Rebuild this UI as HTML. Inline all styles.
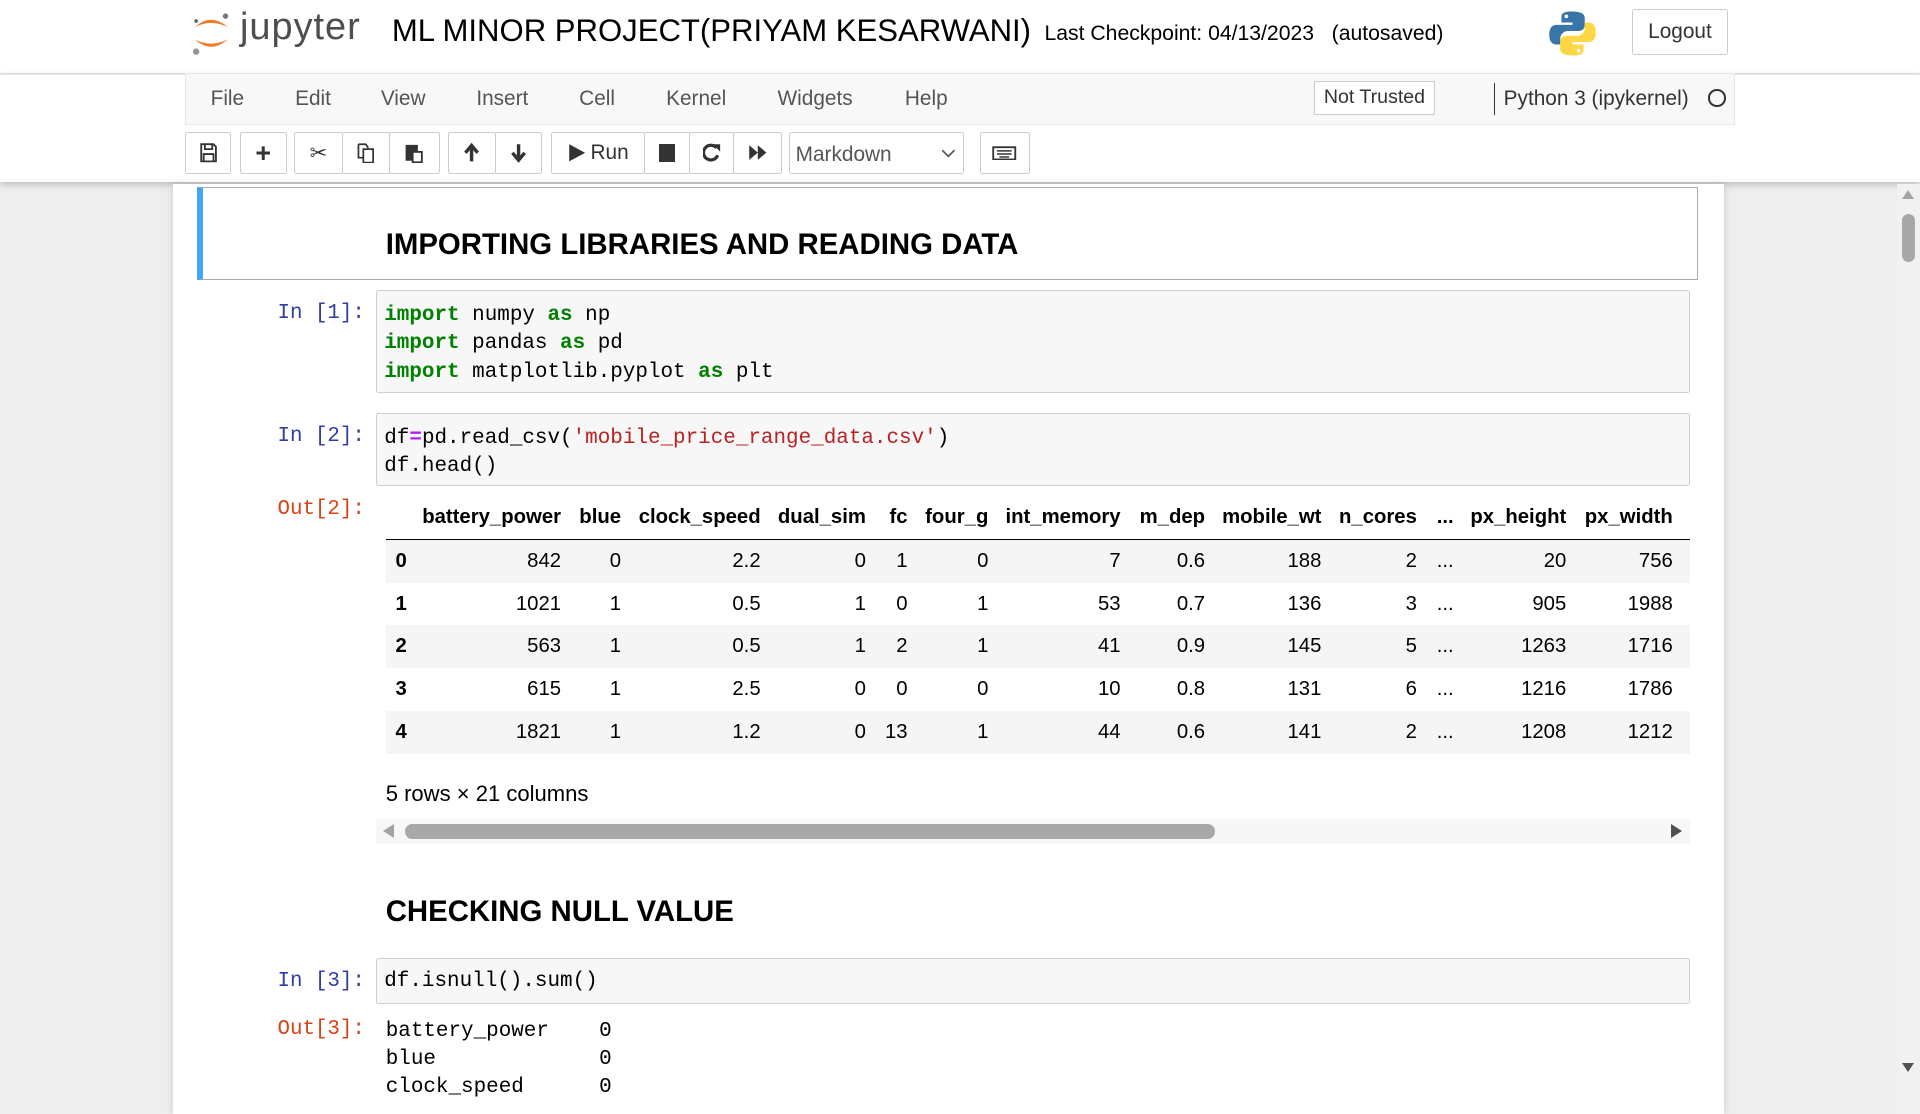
<!DOCTYPE html>
<html><head><meta charset="utf-8"><style>
html,body{margin:0;padding:0}
body{width:1568px;height:882px;overflow:hidden;zoom:1.22449;background:#eee;font-family:"Liberation Sans",sans-serif;position:relative;color:#000}
.abs{position:absolute}
#hdr{left:0;top:0;width:1568px;height:60px;background:#fff;border-bottom:1px solid #e7e7e7}
#bar{left:0;top:61px;width:1568px;height:88px;background:#fff;box-shadow:0 2px 6px rgba(0,0,0,.25)}
.menu{left:151px;top:60px;width:1266px;height:42px;background:#f8f8f8;border:1px solid #e7e7e7;box-sizing:border-box}
.mi{position:absolute;top:71px;font-size:17px;color:#555}
.btn{position:absolute;top:108px;height:34px;border:1px solid #ccc;background:#fff;box-sizing:border-box;border-radius:2px;display:flex;align-items:center;justify-content:center;color:#333;font-size:17px}
.mono{font-family:"Liberation Mono",monospace;font-size:17.1px;line-height:23px}
.prompt{position:absolute;font-family:"Liberation Mono",monospace;font-size:17px;color:#303f9f;text-align:right;width:80px}
.out{color:#d84315}
.inp{position:absolute;left:307px;width:1073px;background:#f7f7f7;border:1px solid #cfcfcf;border-radius:2px;box-sizing:border-box;padding:9px 6px 6px}
.kw{color:#008000;font-weight:bold}
.st{color:#ba2121}
.op{color:#aa22ff;font-weight:bold}
table{border-collapse:collapse;font-size:16.6px;position:absolute;left:315px;top:405px;table-layout:fixed}
td,th{padding:0 8px 0 0;text-align:right;height:35px}
th{font-weight:bold}
thead th{border-bottom:1px solid #000;height:35px}
tbody tr:nth-child(odd){background:#f5f5f5}
td.i,th.i{text-align:left;padding-left:8px}
</style></head><body>
<div id="hdr" class="abs"></div>
<div id="bar" class="abs"></div>
<svg class="abs" style="left:155px;top:8px" width="36" height="38" viewBox="0 0 36 38">
<path d="M4 14 Q17 2 31 14 Q17 7 4 14Z" fill="#f37726"/>
<path d="M4 24 Q17 36 31 24 Q17 31 4 24Z" fill="#f37726"/>
<circle cx="29" cy="5" r="2.2" fill="#767677"/><circle cx="5" cy="34" r="2.6" fill="#989798"/><circle cx="5" cy="9" r="1.5" fill="#616262"/>
</svg>
<div class="abs" style="left:196px;top:5px;font-size:31px;color:#4e4e4e;letter-spacing:.8px">jupyter</div>
<div class="abs" style="left:320px;top:11px;font-size:25.4px">ML MINOR PROJECT(PRIYAM KESARWANI)</div>
<div class="abs" style="left:853px;top:18px;font-size:17.3px">Last Checkpoint: 04/13/2023&nbsp;&nbsp;&nbsp;(autosaved)</div>
<svg class="abs" style="left:1264px;top:7px" width="40" height="40" viewBox="0 0 40 40">
<path d="M19 2c-8 0-8 3-8 5v4h9v2H7c-4 0-6 3-6 8s2 8 6 8h3v-5c0-3 3-6 6-6h9c3 0 5-2 5-5V7c0-3-3-5-11-5z" fill="#3a75a8"/>
<circle cx="15" cy="6" r="1.5" fill="#fff"/>
<path d="M21 38c8 0 8-3 8-5v-4h-9v-2h13c4 0 6-3 6-8s-2-8-6-8h-3v5c0 3-3 6-6 6h-9c-3 0-5 2-5 5v6c0 3 3 5 11 5z" fill="#fdd643"/>
<circle cx="25" cy="34" r="1.5" fill="#fff"/>
</svg>
<div class="abs" style="left:1333px;top:7px;width:78px;height:38px;border:1px solid #ccc;box-sizing:border-box;border-radius:2px;font-size:17px;color:#333;text-align:center;line-height:36px">Logout</div>
<div class="abs menu"></div>
<span class="mi" style="left:172px">File</span><span class="mi" style="left:241px">Edit</span><span class="mi" style="left:311px">View</span><span class="mi" style="left:389px">Insert</span><span class="mi" style="left:473px">Cell</span><span class="mi" style="left:544px">Kernel</span><span class="mi" style="left:635px">Widgets</span><span class="mi" style="left:739px">Help</span>
<div class="abs" style="left:1073px;top:66px;width:99px;height:28px;border:1px solid #ccc;background:#fff;box-sizing:border-box;font-size:16px;color:#333;text-align:center;line-height:26px">Not Trusted</div>
<div class="abs" style="left:1220px;top:68px;width:1px;height:26px;background:#333"></div>
<div class="abs" style="left:1228px;top:71px;font-size:17px;color:#333">Python 3 (ipykernel)</div>
<div class="abs" style="left:1395px;top:73px;width:11px;height:11px;border:2px solid #333;border-radius:50%"></div>
<div class="btn" style="left:151px;width:38px"><svg width="14" height="16"><path d="M1 1h10l2 2v12H1z M4 1v4h6V1 M3 9h8v6H3z" fill="none" stroke="#333" stroke-width="1.5"/></svg></div>
<div class="btn" style="left:196px;width:38px;font-size:22px;font-weight:bold">+</div>
<div class="btn" style="left:240px;width:40px">✂</div>
<div class="btn" style="left:279px;width:40px"><svg width="16" height="17"><path d="M6 5h8v11H6z M2 1h6l2 3 M2 1v11h4" fill="none" stroke="#333" stroke-width="1.4"/></svg></div>
<div class="btn" style="left:318px;width:41px"><svg width="16" height="17"><path d="M1 2h9v12H1z M6 7h8v9H6z" fill="#333" stroke="#333" stroke-width="1"/><path d="M7 8h6v7H7z" fill="#fff"/></svg></div>
<div class="btn" style="left:366px;width:39px"><svg width="14" height="16"><path d="M7 15V3 M2 8l5-6 5 6" fill="none" stroke="#333" stroke-width="2.8"/></svg></div>
<div class="btn" style="left:404px;width:39px"><svg width="14" height="16"><path d="M7 1v12 M2 8l5 6 5-6" fill="none" stroke="#333" stroke-width="2.8"/></svg></div>
<div class="btn" style="left:450px;width:77px"><svg width="14" height="16"><path d="M1 1l13 7-13 7z" fill="#333"/></svg>&nbsp;Run</div>
<div class="btn" style="left:526px;width:38px"><div style="width:13px;height:14px;background:#333"></div></div>
<div class="btn" style="left:563px;width:37px"><svg width="14" height="16"><path d="M11 4A6 6 0 1 0 12 10" fill="none" stroke="#333" stroke-width="2.6"/><path d="M8 1h6v6z" fill="#333"/></svg></div>
<div class="btn" style="left:599px;width:40px"><svg width="16" height="14"><path d="M1 1l7 6-7 6z M8 1l7 6-7 6z" fill="#333"/></svg></div>
<div class="btn" style="left:644px;width:143px;justify-content:flex-start;padding-left:5px;padding-top:4px;font-size:17px;color:#555">Markdown<svg style="position:absolute;right:6px;top:13px" width="12" height="8"><path d="M1 1l5 5 5-5" fill="none" stroke="#555" stroke-width="1.4"/></svg></div>
<div class="btn" style="left:800px;width:41px"><svg width="20" height="12"><rect x="1" y="1" width="18" height="10" fill="none" stroke="#333" stroke-width="1.5"/><path d="M4 4h12M4 6.5h12M6 9h8" stroke="#333" stroke-width="1.2"/></svg></div>
<div class="abs" style="left:141px;top:150px;width:1267px;height:760px;background:#fff;box-shadow:0 0 6px rgba(0,0,0,.15)"></div>
<div class="abs" style="left:161px;top:153px;width:1226px;height:76px;border:1px solid #ababab;border-left:5px solid #42a5f5;box-sizing:border-box"></div>
<div class="abs" style="left:315px;top:186px;font-size:24px;font-weight:bold">IMPORTING LIBRARIES AND READING DATA</div>
<div class="prompt" style="left:218px;top:247px">In&nbsp;[1]:</div>
<div class="inp mono" style="top:237px;height:84px"><span class="kw">import</span> numpy <span class="kw">as</span> np<br><span class="kw">import</span> pandas <span class="kw">as</span> pd<br><span class="kw">import</span> matplotlib.pyplot <span class="kw">as</span> plt</div>
<div class="prompt" style="left:218px;top:347px">In&nbsp;[2]:</div>
<div class="inp mono" style="top:337px;height:60px">df<span class="op">=</span>pd.read_csv(<span class="st">'mobile_price_range_data.csv'</span>)<br>df.head()</div>
<div class="prompt out" style="left:218px;top:407px">Out[2]:</div>
<table>
<colgroup><col style="width:25px"><col style="width:126px"><col style="width:49px"><col style="width:114px"><col style="width:86px"><col style="width:34px"><col style="width:66px"><col style="width:108px"><col style="width:69px"><col style="width:95px"><col style="width:78px"><col style="width:30px"><col style="width:92px"><col style="width:93px"></colgroup>
<thead><tr><th></th><th>battery_power</th><th>blue</th><th>clock_speed</th><th>dual_sim</th><th>fc</th><th>four_g</th><th>int_memory</th><th>m_dep</th><th>mobile_wt</th><th>n_cores</th><th>...</th><th>px_height</th><th style="padding-right:14px">px_width</th></tr></thead>
<tbody>
<tr><th class="i">0</th><td>842</td><td>0</td><td>2.2</td><td>0</td><td>1</td><td>0</td><td>7</td><td>0.6</td><td>188</td><td>2</td><td>...</td><td>20</td><td style="padding-right:14px">756</td></tr>
<tr><th class="i">1</th><td>1021</td><td>1</td><td>0.5</td><td>1</td><td>0</td><td>1</td><td>53</td><td>0.7</td><td>136</td><td>3</td><td>...</td><td>905</td><td style="padding-right:14px">1988</td></tr>
<tr><th class="i">2</th><td>563</td><td>1</td><td>0.5</td><td>1</td><td>2</td><td>1</td><td>41</td><td>0.9</td><td>145</td><td>5</td><td>...</td><td>1263</td><td style="padding-right:14px">1716</td></tr>
<tr><th class="i">3</th><td>615</td><td>1</td><td>2.5</td><td>0</td><td>0</td><td>0</td><td>10</td><td>0.8</td><td>131</td><td>6</td><td>...</td><td>1216</td><td style="padding-right:14px">1786</td></tr>
<tr><th class="i">4</th><td>1821</td><td>1</td><td>1.2</td><td>0</td><td>13</td><td>1</td><td>44</td><td>0.6</td><td>141</td><td>2</td><td>...</td><td>1208</td><td style="padding-right:14px">1212</td></tr>
</tbody></table>
<div class="abs" style="left:315px;top:638px;font-size:18px">5 rows × 21 columns</div>
<div class="abs" style="left:307px;top:669px;width:1073px;height:20px;background:#f7f7f7"></div>
<div class="abs" style="left:313px;top:673px;width:0;height:0;border-top:6px solid transparent;border-bottom:6px solid transparent;border-right:9px solid #a3a3a3"></div>
<div class="abs" style="left:1365px;top:673px;width:0;height:0;border-top:6px solid transparent;border-bottom:6px solid transparent;border-left:9px solid #505050"></div>
<div class="abs" style="left:331px;top:673px;width:661px;height:12px;border-radius:6px;background:#a8a8a8"></div>
<div class="abs" style="left:315px;top:731px;font-size:24px;font-weight:bold">CHECKING NULL VALUE</div>
<div class="prompt" style="left:218px;top:792px">In&nbsp;[3]:</div>
<div class="inp mono" style="top:782px;height:38px;padding-top:8px">df.isnull().sum()</div>
<div class="prompt out" style="left:218px;top:831px">Out[3]:</div>
<div class="abs mono" style="left:315px;top:831px">battery_power&nbsp;&nbsp;&nbsp;&nbsp;0<br>blue&nbsp;&nbsp;&nbsp;&nbsp;&nbsp;&nbsp;&nbsp;&nbsp;&nbsp;&nbsp;&nbsp;&nbsp;&nbsp;0<br>clock_speed&nbsp;&nbsp;&nbsp;&nbsp;&nbsp;&nbsp;0</div>
<div class="abs" style="left:1549px;top:150px;width:19px;height:760px;background:#f1f1f1"></div>
<div class="abs" style="left:1553px;top:155px;width:0;height:0;border-left:5px solid transparent;border-right:5px solid transparent;border-bottom:8px solid #a3a3a3"></div>
<div class="abs" style="left:1553px;top:868px;width:0;height:0;border-left:5px solid transparent;border-right:5px solid transparent;border-top:8px solid #505050"></div>
<div class="abs" style="left:1553px;top:175px;width:11px;height:39px;border-radius:6px;background:#a8a8a8"></div>
</body></html>
